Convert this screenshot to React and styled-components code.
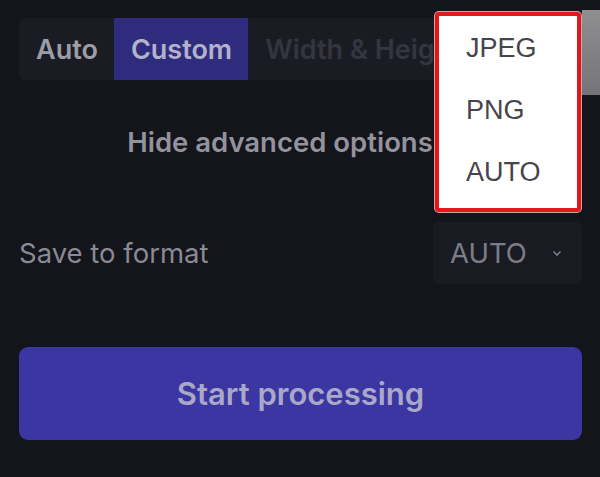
import React from "react";
import styled, { createGlobalStyle } from "styled-components";

const Global = createGlobalStyle`
  html, body {
    margin: 0;
    padding: 0;
    background: #14141b;
  }
  * {
    box-sizing: border-box;
  }
`;

const Page = styled.div`
  position: relative;
  width: 600px;
  height: 477px;
  overflow: hidden;
  padding: 18px 18px 0 19px;
  background: #14141b;
  font-family: Inter, "Noto Sans", sans-serif;
`;

const Tabs = styled.div`
  display: flex;
  height: 62px;
  background: #1b1c23;
  border-radius: 6px;
  overflow: hidden;
`;

const Tab = styled.div`
  display: flex;
  align-items: center;
  padding: 0 16px 0 17px;
  font-size: 27px;
  font-weight: 600;
  white-space: nowrap;
  color: ${(p) => (p.$active ? "#b3b2cc" : p.$faded ? "#34353f" : "#9d9da8")};
  background: ${(p) => (p.$active ? "#2f2b7d" : "transparent")};
`;

const Toggle = styled.div`
  margin-top: 47px;
  padding-right: 41px;
  text-align: center;
  font-size: 27.5px;
  font-weight: 600;
  line-height: 30px;
  white-space: nowrap;
  color: #93939e;
`;

const Row = styled.div`
  display: flex;
  align-items: center;
  justify-content: space-between;
  margin-top: 65px;
`;

const Label = styled.div`
  font-size: 27.5px;
  color: #8a8a95;
`;

const Select = styled.div`
  display: flex;
  align-items: center;
  justify-content: space-between;
  width: 149px;
  height: 62px;
  padding: 0 20px 0 17px;
  background: #1a1b22;
  border-radius: 6px;
  font-size: 27.5px;
  color: #7d7d88;
`;

const Button = styled.div`
  display: flex;
  align-items: center;
  justify-content: center;
  height: 93px;
  margin-top: 63px;
  background: #3b36a1;
  border-radius: 9px;
  font-size: 31px;
  font-weight: 600;
  color: #a9a8c9;
`;

const Menu = styled.div`
  position: absolute;
  left: 435px;
  top: 12px;
  width: 146px;
  height: 200px;
  padding: 1px 0 5px;
  background: #ffffff;
  border: 4px solid #e3161c;
  border-radius: 4px;
  box-shadow: 0 0 0 1px #c9a6a6;
`;

const Item = styled.div`
  display: flex;
  align-items: center;
  height: 62px;
  padding-left: 27px;
  font-family: "Liberation Sans", Arial, sans-serif;
  font-size: 27px;
  color: #45454d;
`;

const Edge = styled.div`
  position: absolute;
  left: 582px;
  top: 10px;
  width: 18px;
  height: 85px;
  background: linear-gradient(#8f8f90, #74747a);
`;

const Chevron = () => (
  <svg width="10" height="7" viewBox="0 0 10 7">
    <path d="M1.5 1.5 L5 5 L8.5 1.5" fill="none" stroke="#7d7d88" strokeWidth="1.6" />
  </svg>
);

export default function App() {
  return (
    <>
      <Global />
      <Page>
        <Tabs>
          <Tab>Auto</Tab>
          <Tab $active>Custom</Tab>
          <Tab $faded>Width &amp; Height</Tab>
        </Tabs>
        <Toggle>Hide advanced options</Toggle>
        <Row>
          <Label>Save to format</Label>
          <Select>
            AUTO
            <Chevron />
          </Select>
        </Row>
        <Button>Start processing</Button>
        <Edge />
        <Menu>
          <Item>JPEG</Item>
          <Item>PNG</Item>
          <Item>AUTO</Item>
        </Menu>
      </Page>
    </>
  );
}
